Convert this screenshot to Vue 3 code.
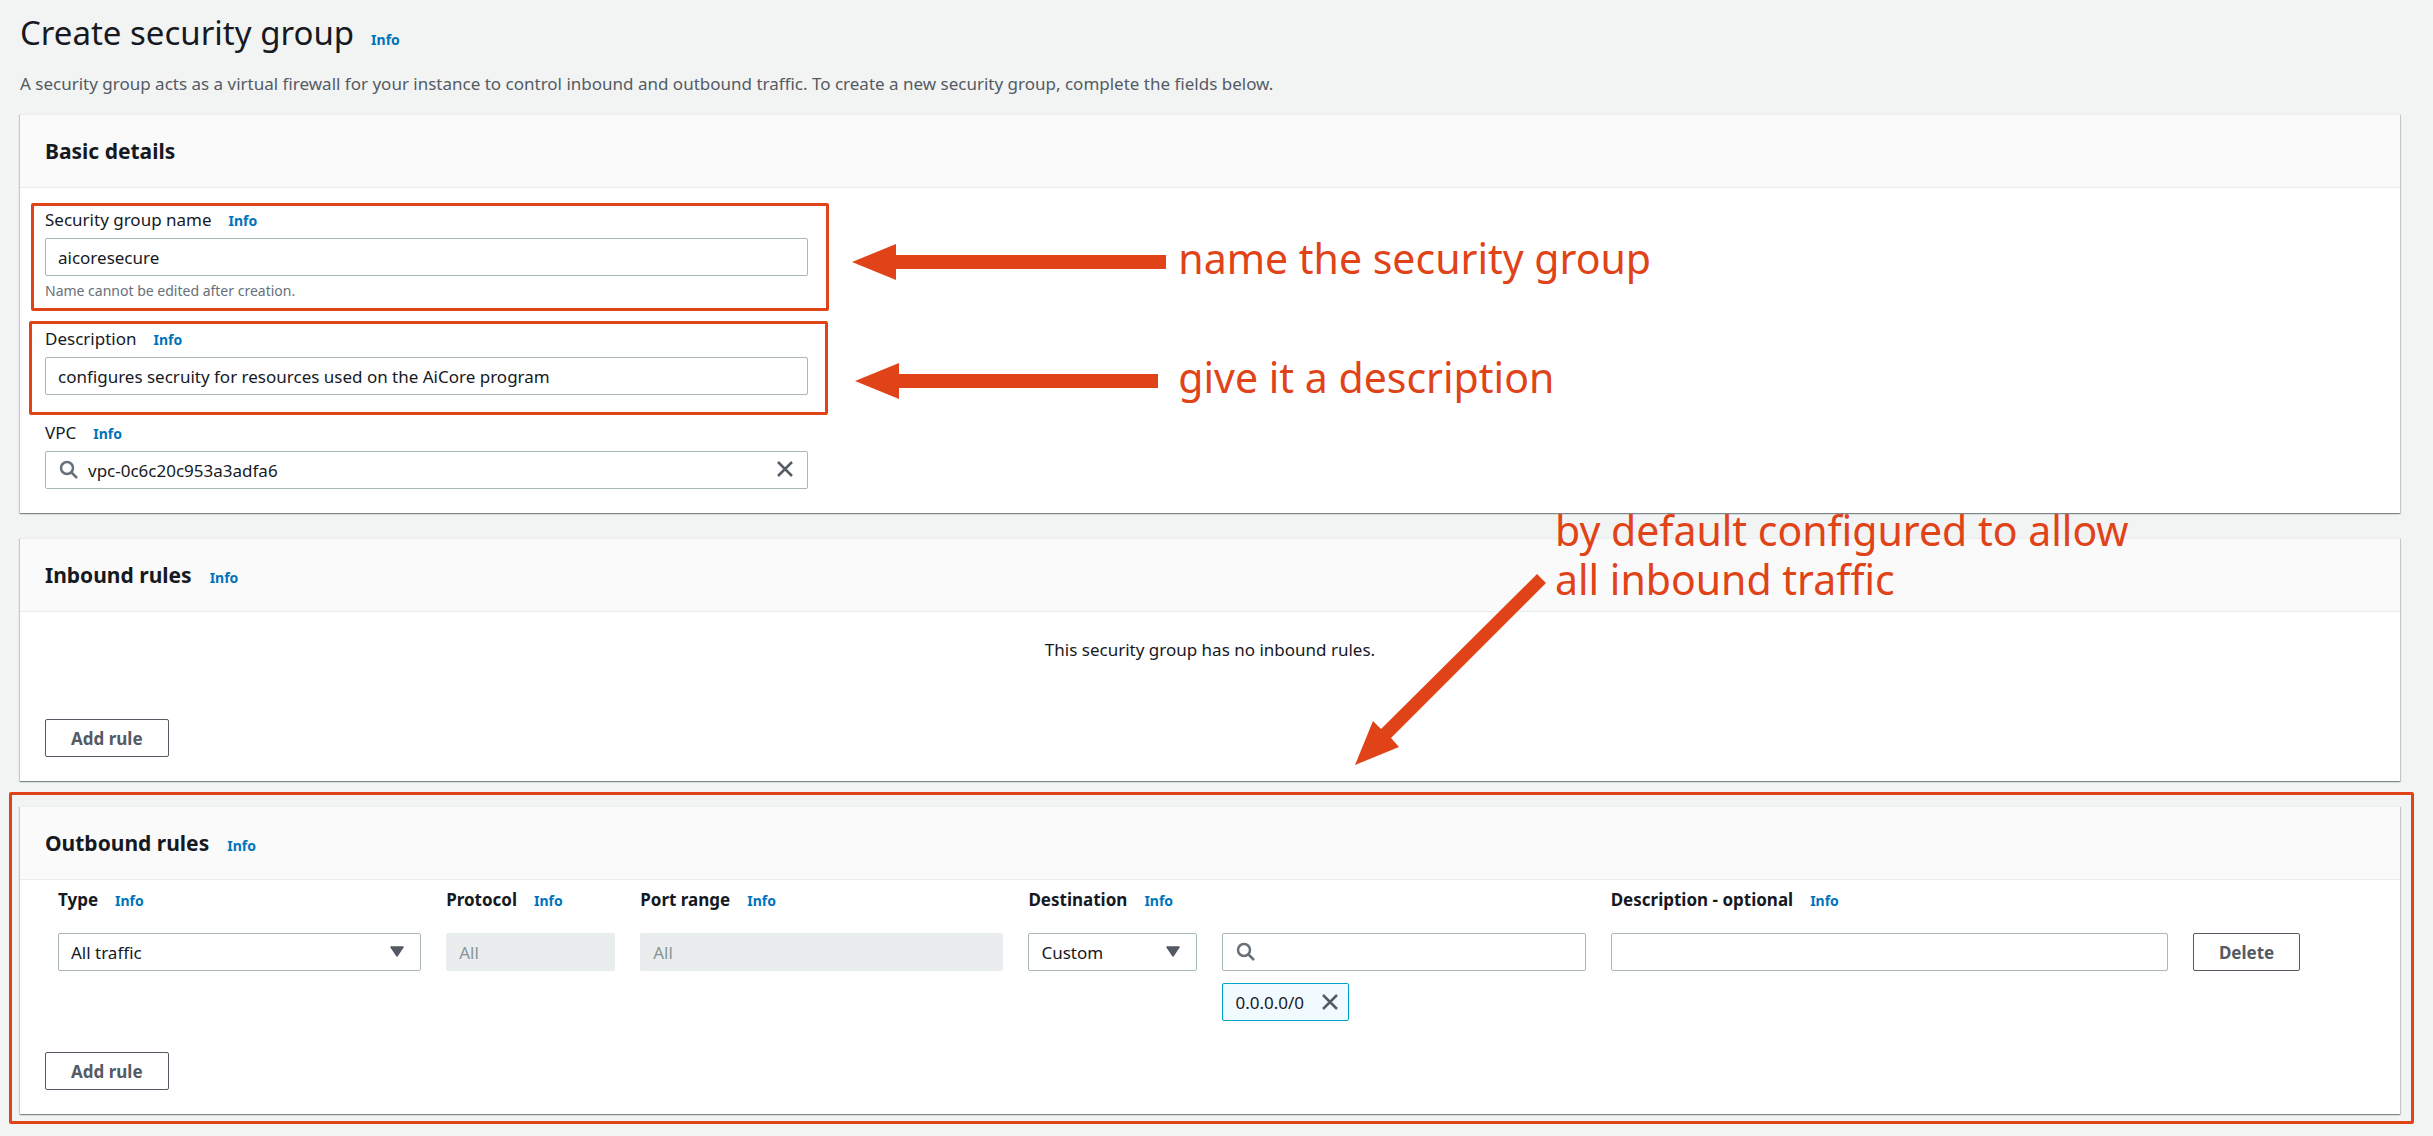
<script setup>
import { ref } from 'vue'

const groupName = ref('aicoresecure')
const description = ref('configures secruity for resources used on the AiCore program')
const vpc = ref('vpc-0c6c20c953a3adfa6')
const trafficType = ref('All traffic')
const destination = ref('Custom')
const destinationSearch = ref('')
const ruleDescription = ref('')
</script>

<template>
  <main class="page">
    <header class="page-header">
      <div class="title-row">
        <h1>Create security group</h1>
        <a class="info" href="#">Info</a>
      </div>
      <p>
        A security group acts as a virtual firewall for your instance to control inbound and outbound traffic. To create
        a new security group, complete the fields below.
      </p>
    </header>

    <section class="card">
      <div class="card-header"><h2>Basic details</h2></div>
      <div class="card-body details">
        <div class="field">
          <div class="label-row">
            <label for="group-name">Security group name</label>
            <a class="info" href="#">Info</a>
          </div>
          <input id="group-name" v-model="groupName" class="control" type="text" />
          <p class="hint">Name cannot be edited after creation.</p>
          <div class="frame frame-name"></div>
          <div class="callout">
            <svg class="arrow" width="314" height="36" viewBox="0 0 314 36" aria-hidden="true">
              <path d="M0 18 44 0V11H314V25H44V36Z" />
            </svg>
            <span>name the security group</span>
          </div>
        </div>

        <div class="field">
          <div class="label-row">
            <label for="group-description">Description</label>
            <a class="info" href="#">Info</a>
          </div>
          <input id="group-description" v-model="description" class="control" type="text" />
          <div class="frame frame-description"></div>
          <div class="callout">
            <svg class="arrow" width="314" height="36" viewBox="0 0 314 36" aria-hidden="true">
              <path d="M3 18 47 0V11H306V25H47V36Z" />
            </svg>
            <span>give it a description</span>
          </div>
        </div>

        <div class="field">
          <div class="label-row">
            <label for="vpc">VPC</label>
            <a class="info" href="#">Info</a>
          </div>
          <div class="control-wrap">
            <svg class="search-icon" width="20" height="20" viewBox="0 0 20 20" aria-hidden="true">
              <circle cx="8" cy="8" r="6" />
              <path d="m12 12 6 6" />
            </svg>
            <input id="vpc" v-model="vpc" class="control searchable" type="text" />
            <button class="clear" type="button" aria-label="Clear" @click="vpc = ''">
              <svg class="close-icon" width="18" height="18" viewBox="0 0 18 18" aria-hidden="true">
                <path d="m2 2 14 14M16 2 2 16" />
              </svg>
            </button>
          </div>
        </div>
      </div>
    </section>

    <section class="card">
      <div class="card-header">
        <h2>Inbound rules</h2>
        <a class="info" href="#">Info</a>
      </div>
      <div class="card-body">
        <p class="empty">This security group has no inbound rules.</p>
        <button class="button" type="button">Add rule</button>
      </div>
      <div class="callout-diagonal">
        <svg class="arrow" width="192" height="192" viewBox="0 0 192 192" aria-hidden="true">
          <path d="M0 191 18 147 26 155 182 0 191 9 36 164 44 173Z" />
        </svg>
        <span>by default configured to allow<br />all inbound traffic</span>
      </div>
    </section>

    <section class="card">
      <div class="card-header">
        <h2>Outbound rules</h2>
        <a class="info" href="#">Info</a>
      </div>
      <div class="card-body outbound">
        <div class="rules">
          <div class="label-row span-2">
            <label for="rule-type">Type</label>
            <a class="info" href="#">Info</a>
          </div>
          <div class="label-row">
            <label for="rule-protocol">Protocol</label>
            <a class="info" href="#">Info</a>
          </div>
          <div class="label-row span-2">
            <label for="rule-port">Port range</label>
            <a class="info" href="#">Info</a>
          </div>
          <div class="label-row span-3">
            <label for="rule-destination">Destination</label>
            <a class="info" href="#">Info</a>
          </div>
          <div class="label-row span-4">
            <label for="rule-description">Description - optional</label>
            <a class="info" href="#">Info</a>
          </div>

          <div class="control-wrap span-2">
            <select id="rule-type" v-model="trafficType" class="control">
              <option>All traffic</option>
            </select>
            <svg class="caret" width="14" height="11" viewBox="0 0 14 11" aria-hidden="true">
              <path d="M1 1H13L7 10Z" />
            </svg>
          </div>
          <input id="rule-protocol" class="control" type="text" value="All" disabled />
          <input id="rule-port" class="control span-2" type="text" value="All" disabled />
          <div class="control-wrap">
            <select id="rule-destination" v-model="destination" class="control">
              <option>Custom</option>
            </select>
            <svg class="caret" width="14" height="11" viewBox="0 0 14 11" aria-hidden="true">
              <path d="M1 1H13L7 10Z" />
            </svg>
          </div>
          <div class="destination span-2">
            <div class="control-wrap">
              <svg class="search-icon" width="20" height="20" viewBox="0 0 20 20" aria-hidden="true">
                <circle cx="8" cy="8" r="6" />
                <path d="m12 12 6 6" />
              </svg>
              <input
                v-model="destinationSearch"
                class="control searchable"
                type="text"
                aria-label="Search destinations"
              />
            </div>
            <div class="tag">
              <span>0.0.0.0/0</span>
              <button type="button" aria-label="Remove 0.0.0.0/0">
                <svg class="close-icon" width="18" height="18" viewBox="0 0 18 18" aria-hidden="true">
                  <path d="m2 2 14 14M16 2 2 16" />
                </svg>
              </button>
            </div>
          </div>
          <input id="rule-description" v-model="ruleDescription" class="control span-3" type="text" />
          <button class="button" type="button">Delete</button>
        </div>
        <button class="button" type="button">Add rule</button>
      </div>
      <div class="frame frame-outbound"></div>
    </section>
  </main>
</template>

<style>
body {
  margin: 0;
  background: #f2f3f3;
}
</style>

<style scoped>
.page,
.page * {
  box-sizing: border-box;
}

.page {
  display: flex;
  flex-direction: column;
  gap: 25px;
  padding: 10px 33px 21px 20px;
  color: #16191f;
  font-family: 'Noto Sans', 'Open Sans', sans-serif;
  font-size: 17px;
  line-height: 27px;
}

h1,
h2,
p {
  margin: 0;
}

.page-header {
  display: flex;
  flex-direction: column;
  gap: 15px;
  margin-bottom: -8px;
}

.title-row {
  display: flex;
  align-items: baseline;
  gap: 17px;
}

h1 {
  font-size: 33px;
  font-weight: 400;
  line-height: 45px;
}

.page-header p {
  color: #545b64;
}

.info {
  color: #0073bb;
  font-size: 14px;
  font-weight: 700;
  line-height: 20px;
  text-decoration: none;
}

.card {
  position: relative;
  border-top: 1px solid #eaeded;
  background: #fff;
  box-shadow:
    0 1px 1px rgba(0, 28, 36, 0.3),
    1px 1px 1px rgba(0, 28, 36, 0.15),
    -1px 1px 1px rgba(0, 28, 36, 0.15);
}

.card-header {
  display: flex;
  align-items: baseline;
  gap: 18px;
  padding: 21px 25px;
  border-bottom: 1px solid #eaeded;
  background: #fafafa;
}

h2 {
  font-size: 21px;
  font-weight: 700;
  line-height: 30px;
}

.card-body {
  padding: 24px 25px;
}

.details {
  display: grid;
  grid-template-columns: repeat(3, minmax(0, 1fr));
  gap: 24px 20px;
  padding-top: 18px;
}

.field {
  position: relative;
  grid-column: 1;
}

.label-row {
  display: flex;
  align-items: baseline;
  gap: 17px;
  white-space: nowrap;
}

.field .label-row {
  margin-bottom: 5px;
}

.control {
  display: block;
  width: 100%;
  height: 38px;
  margin: 0;
  padding: 0 12px;
  border: 1px solid #aab7b8;
  border-radius: 2px;
  background: #fff;
  color: #16191f;
  font: inherit;
  appearance: none;
}

.control:disabled {
  border-color: #eaeded;
  background: #eaeded;
  color: #879596;
  opacity: 1;
}

.control-wrap {
  position: relative;
}

.searchable {
  padding-left: 42px;
}

.search-icon {
  position: absolute;
  top: 9px;
  left: 14px;
  fill: none;
  stroke: #687078;
  stroke-width: 2.5;
}

.close-icon {
  display: block;
  fill: none;
  stroke: #545b64;
  stroke-width: 2.5;
}

.clear {
  position: absolute;
  top: 9px;
  right: 14px;
  padding: 0;
  border: 0;
  background: none;
}

.caret {
  position: absolute;
  top: 13px;
  right: 17px;
  fill: #545b64;
  stroke: #545b64;
  stroke-width: 1.5;
  stroke-linejoin: round;
  pointer-events: none;
}

.hint {
  margin-top: 5px;
  color: #687078;
  font-size: 14px;
  line-height: 20px;
}

.empty {
  margin-bottom: 56px;
  text-align: center;
}

.button {
  display: block;
  justify-self: start;
  height: 38px;
  padding: 0 25px;
  border: 1px solid #545b64;
  border-radius: 2px;
  background: #fff;
  color: #545b64;
  font: inherit;
  font-weight: 700;
}

.outbound {
  padding-top: 6px;
}

.rules {
  display: grid;
  grid-template-columns: repeat(12, minmax(0, 1fr));
  align-items: start;
  gap: 20px 25px;
  margin-bottom: 31px;
  padding: 0 13px;
}

.rules label {
  font-weight: 700;
}

.span-2 {
  grid-column: span 2;
}

.span-3 {
  grid-column: span 3;
}

.span-4 {
  grid-column: span 4;
}

.destination {
  display: flex;
  flex-direction: column;
  align-items: stretch;
  gap: 12px;
}

.tag {
  display: flex;
  align-items: center;
  align-self: flex-start;
  gap: 17px;
  height: 38px;
  padding: 0 9px 0 12px;
  border: 1px solid #00a1c9;
  border-radius: 2px;
  background: #f1faff;
}

.tag button {
  padding: 0;
  border: 0;
  background: none;
}

.frame {
  position: absolute;
  border: 3px solid #e04318;
  border-radius: 2px;
  pointer-events: none;
}

.frame-name {
  inset: -3px -21px -10px -14px;
}

.frame-description {
  inset: -4px -20px -20px -16px;
}

.frame-outbound {
  inset: -15px -14px -10px -11px;
}

.callout,
.callout-diagonal {
  position: absolute;
  z-index: 1;
  display: flex;
  align-items: flex-start;
  color: #e04318;
  font-size: 41px;
  line-height: 49px;
  white-space: nowrap;
  pointer-events: none;
}

.callout {
  top: 28px;
  left: calc(100% + 44px);
  gap: 12px;
}

.callout-diagonal {
  top: -33px;
  left: calc(50% + 145px);
  gap: 8px;
}

.arrow {
  flex: none;
  fill: #e04318;
}

.callout .arrow {
  margin-top: 10px;
}

.callout-diagonal .arrow {
  margin-top: 68px;
}
</style>
